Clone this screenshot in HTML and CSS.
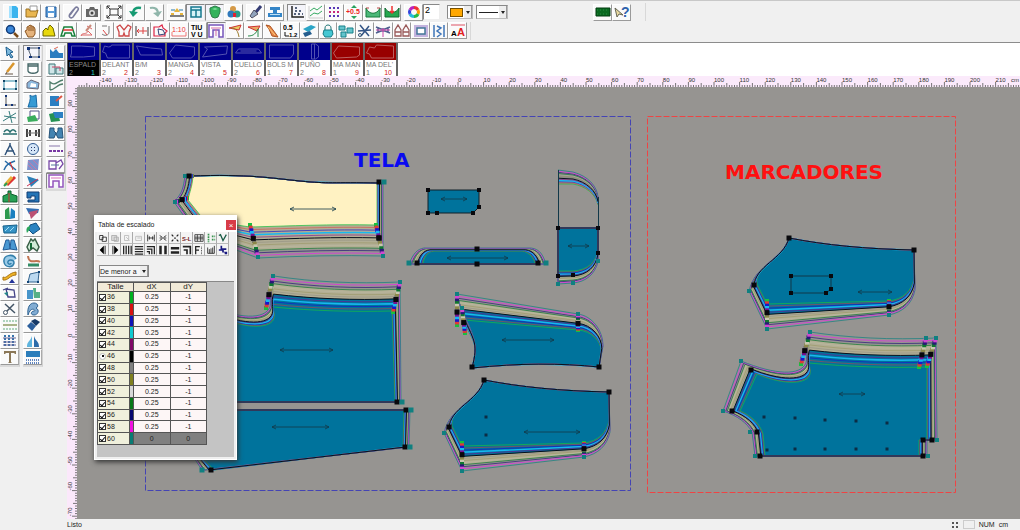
FILE: index.html
```html
<!DOCTYPE html>
<html lang="es">
<head>
<meta charset="utf-8">
<title>Patronaje</title>
<link rel="stylesheet" href="styles.css">
</head>
<body>
<header class="bars">
  <div class="bar bar-main">
    <div class="group">
      <button aria-label="Nuevo"><svg viewBox="0 0 16 14"><path fill="#3cb4ee" d="M4 1h7l2 2v10H4z"/><path fill="#a5e2ff" d="M4 1h3v12H4z"/></svg></button>
      <button aria-label="Abrir"><svg viewBox="0 0 16 14"><path fill="#fff" stroke="#999" d="M6 1h7v6H6z"/><path fill="#e9b650" stroke="#9b7020" d="M2 4h3l1 2h6l2-1-2 7H2z"/></svg></button>
      <button aria-label="Guardar"><svg viewBox="0 0 16 14"><path fill="#5a9bd8" stroke="#245c9c" d="M3 2h10v10H3z"/><path fill="#fff" d="M5 2h6v4H5zM5 8h6v4H5z"/></svg></button>
    </div>
    <div class="group">
      <button aria-label="Adjuntar"><svg viewBox="0 0 16 14"><path fill="none" stroke="#7a7c9c" stroke-width="1.6" d="M5 10l5-7c2-2 4 0 3 2l-5 7c-2 2-5 0-3-3l4-5"/></svg></button>
      <button aria-label="Capturar"><svg viewBox="0 0 16 14"><path fill="#666" d="M2 4h3l1-2h4l1 2h3v8H2z"/><circle cx="8" cy="8" r="3" fill="#ddd"/><circle cx="8" cy="8" r="1.5" fill="#444"/></svg></button>
    </div>
    <div class="group">
      <button aria-label="Ver todo"><svg viewBox="0 0 16 14"><path fill="none" stroke="#333" d="M4 4h8v6H4zM1 1l3 3M15 1l-3 3M1 13l3-3M15 13l-3-3M1 4V1h3M12 1h3v3M1 10v3h3M12 13h3v-3"/></svg></button>
    </div>
    <div class="group">
      <button aria-label="Deshacer"><svg viewBox="0 0 16 14"><path fill="none" stroke="#159a72" stroke-width="2.4" d="M13 3C8 2 5 4 5 9"/><path fill="#159a72" d="M1 6l4 6 5-5z"/></svg></button>
      <button aria-label="Rehacer"><svg viewBox="0 0 16 14"><path fill="none" stroke="#8fb5aa" stroke-width="2.2" d="M3 3c5-1 8 1 8 6"/><path fill="#8fb5aa" d="M6 8l5 4 4-6z"/></svg></button>
    </div>
    <div class="group">
      <button aria-label="Medir"><svg viewBox="0 0 16 14"><path fill="#e6b43c" d="M2 8h3v2H2zM11 8h3v2h-3zM8 3l3 4H5z"/><path stroke="#555" stroke-width="1.500" d="M1 11h14"/><path stroke="#2478a8" d="M2 5h4M10 5h4"/></svg></button>
      <button class="on" aria-label="Cuadrícula"><svg viewBox="0 0 16 14"><path fill="#d6f2f8" stroke="#16788e" stroke-width="1.500" d="M3 2h10v10H3zM3 5h10M8 5v7"/></svg></button>
      <button class="on" aria-label="Relleno"><svg viewBox="0 0 16 14"><path fill="#32b25c" stroke="#2d7c48" d="M3 3l5-2 5 2v4l-2 5-3 1-3-1-2-5z"/><path fill="#7fdd98" d="M5 4l3-1 3 1-3 1z"/></svg></button>
      <button aria-label="Colores"><svg viewBox="0 0 16 14"><circle cx="7" cy="4" r="3" fill="#d59a48"/><circle cx="5" cy="9" r="3.500" fill="#2f78bc"/><circle cx="11" cy="9" r="3.500" fill="#2a9c8a"/><path fill="#d23" d="M7 8h3v4H7z"/></svg></button>
    </div>
    <div class="group">
      <button aria-label="Pincel"><svg viewBox="0 0 16 14"><path stroke="#353c74" stroke-width="3" d="M13 1L8 7"/><path fill="#91a4bd" stroke="#556" d="M6 5l4 4-6 4-2-2z"/></svg></button>
      <button aria-label="Trazar"><svg viewBox="0 0 16 14"><path fill="#3485c7" d="M3 2h10v3H3zM6 5h4v3h5v4H1V8h5z"/><path fill="#bce0f5" d="M3 9h10v1H3z"/></svg></button>
    </div>
    <div class="group">
      <button class="on" aria-label="Ejes"><svg viewBox="0 0 16 14"><path fill="none" stroke="#222" stroke-width="1.500" d="M3 1v11h12"/><path stroke="#235" stroke-width="1.500" stroke-dasharray="2 2" d="M5 9h9M6 6h7M6 3h3"/></svg></button>
      <button aria-label="Curvas"><svg viewBox="0 0 16 14"><path fill="none" stroke="#35aa62" d="M2 6l4-3 3 2 5-4M2 11l4-3 4 1 4-3"/><path stroke="#ccc" fill="none" d="M1 1v12h14"/></svg></button>
      <button aria-label="Puntos"><svg viewBox="0 0 16 14"><path stroke="#5937b5" stroke-width="2" stroke-dasharray="2 2" d="M2 3h12M2 11h12"/><path stroke="#c7277c" stroke-width="2" stroke-dasharray="2 2" d="M2 7h12"/></svg></button>
      <button aria-label="Paso 0,5"><svg viewBox="0 0 16 14"><text x="0" y="9" font-size="7" font-weight="bold" fill="#e22">+0.5</text><path fill="#29a25d" d="M8 0l3 3H5zM8 14l3-3H5z"/></svg></button>
      <button aria-label="Curva abierta"><svg viewBox="0 0 16 14"><path fill="#4bb878" stroke="#167c3c" d="M1 3c3 7 11 7 14 0v9H1z"/><path stroke="#b44" d="M1 3h3M12 3h3"/></svg></button>
      <button aria-label="Curva cerrada"><svg viewBox="0 0 16 14"><path fill="#25a74e" stroke="#106c30" d="M1 3c3 6 11 6 14 0v9H1z"/><path stroke="#e33" stroke-width="1.500" fill="none" d="M8 1v7M6 6l2 2 2-2"/></svg></button>
    </div>
    <div class="group">
      <button aria-label="Color"><svg viewBox="0 0 16 14"><g fill="none" stroke-width="3"><path stroke="#e33" d="M8 2.500A4.500 4.500 0 0 1 12 5"/><path stroke="#f90" d="M12 5a4.500 4.500 0 0 1 0 4"/><path stroke="#2b4" d="M12 9a4.500 4.500 0 0 1-4 2.500"/><path stroke="#2bd" d="M8 11.500A4.500 4.500 0 0 1 4 9"/><path stroke="#34d" d="M4 9a4.500 4.500 0 0 1 0-4"/><path stroke="#b2b" d="M4 5a4.500 4.500 0 0 1 4-2.500"/></g></svg></button>
      <input class="weight" aria-label="Grosor" value="2">
    </div>
    <div class="group combos">
      <button class="combo" aria-label="Color de relleno"><i class="swatch"></i><b class="drop"></b></button>
      <button class="combo combo-line" aria-label="Tipo de línea"><i class="stroke"></i><b class="drop"></b></button>
    </div>
    <div class="group help">
      <button aria-label="Monitor"><svg viewBox="0 0 16 14"><path fill="#0a6a20" stroke="#033c10" d="M1 3h14v8H1z"/><path stroke="#2a8a42" stroke-dasharray="1 2" d="M2 5h12M2 9h12"/></svg></button>
      <button aria-label="Ayuda"><svg viewBox="0 0 16 14"><path fill="#e8d9a0" stroke="#665" d="M1 3l2 9 2-3 4 1z"/><text x="7" y="12" font-size="14" font-weight="bold" fill="#2f62ac">?</text></svg></button>
    </div>
  </div>
  <div class="bar bar-tools">
    <button aria-label="Zoom"><svg viewBox="0 0 16 14"><path stroke="#7a4a18" stroke-width="2.500" d="M10 9l4 4"/><circle cx="6.500" cy="5.500" r="4" fill="#3a86d8" stroke="#123c78" stroke-width="1.500"/></svg></button>
    <button aria-label="Mover"><svg viewBox="0 0 16 14"><path fill="#e5b37c" stroke="#8a5420" d="M5 13L2 7l2-1V3l2-1 1-1 2 1 2 1 1 2v5l-2 3z"/><path stroke="#8a5420" d="M6 3v4M8 2v5M10 3v4"/></svg></button>
    <button aria-label="Patrón"><svg viewBox="0 0 16 14"><path fill="#e8d80c" stroke="#6d6600" d="M2 12V7l3-3 2 2V4l2-3 3 3 2 8z"/></svg></button>
    <button aria-label="Falda"><svg viewBox="0 0 16 14"><path fill="none" stroke="#17803a" stroke-width="1.500" d="M4 3h8l3 9h-3l-1-3H5l-1 3H1z"/><path stroke="#d33" stroke-width="1.500" d="M3 6h10"/></svg></button>
    <button aria-label="Editar"><svg viewBox="0 0 16 14"><path fill="none" stroke="#d66" d="M2 12c1-4 6-1 7-5l4 4H2M8 2l5 3"/><path stroke="#c98a7a" stroke-width="2" d="M12 1L7 7"/></svg></button>
    <button aria-label="Margen"><svg viewBox="0 0 16 14"><path fill="none" stroke="#777" d="M5 2h5M12 2v6c0 4-5 4-7 2"/><path stroke="#d44" d="M6 6l4 5"/></svg></button>
    <button aria-label="Copiar espejo"><svg viewBox="0 0 16 14"><path fill="none" stroke="#cc4747" stroke-width="1.300" d="M3 12V8L1 3l3-2 4 5 4-5 3 2-2 5v4H9l-1-3-1 3z"/></svg></button>
    <button aria-label="Distancia H"><svg viewBox="0 0 16 14"><path fill="none" stroke="#777" stroke-width="1.500" d="M2 2v10M14 3v9"/><path stroke="#d44" fill="none" d="M3 7h10M5 5L3 7l2 2M9 3v7"/></svg></button>
    <button aria-label="Rotar pieza"><svg viewBox="0 0 16 14"><path fill="none" stroke="#d24" stroke-width="1.200" d="M1 12V3h5l3-2 1 3 4 3-2 2v3z"/><path fill="none" stroke="#347" d="M5 5l5 1 2 4-6 1z"/></svg></button>
    <button aria-label="Escala 1:10"><svg viewBox="0 0 16 14"><text x="1" y="8" font-size="7" fill="#e33">1:10</text><path fill="none" stroke="#e77" d="M1 8v4h14V8"/></svg></button>
    <button aria-label="Texto vertical"><svg viewBox="0 0 16 14"><text x="1" y="6" font-size="7" font-weight="bold">TIU</text><text x="1" y="13" font-size="7" font-weight="bold">V U</text></svg></button>
    <button class="on" aria-label="Máquina"><svg viewBox="0 0 16 14"><path fill="#fff" stroke="#7556ba" stroke-width="1.500" d="M1 1h14v12h-4V6H5v7H1z"/><path stroke="#d36fa5" d="M3 4h10M8 5v7"/></svg></button>
    <button aria-label="Ángulo"><svg viewBox="0 0 16 14"><path fill="#e9ca64" stroke="#c33" d="M2 4l12-3-2 5z"/><path fill="none" stroke="#997a2a" d="M4 4c5 0 7 3 8 9"/></svg></button>
    <button aria-label="Ángulo recto"><svg viewBox="0 0 16 14"><path fill="#e9a864" stroke="#c33" d="M2 3l12-1-3 5z"/><path fill="none" stroke="#2a8a4a" d="M2 12c6 0 8-3 10-7v8"/></svg></button>
    <button aria-label="Pinza"><svg viewBox="0 0 16 14"><path fill="#e8884c" stroke="#ad5420" d="M2 1l4 1 6 8 2 3-6-1-3-7z"/><path stroke="#fc7" d="M4 3l7 8"/></svg></button>
    <button aria-label="Rango"><svg viewBox="0 0 16 14"><text x="0" y="6" font-size="7" font-weight="bold">0.5</text><text x="6" y="13" font-size="6" font-weight="bold">1.2</text><path fill="none" stroke="#111" d="M2 8v4h4"/></svg></button>
    <button aria-label="Goma"><svg viewBox="0 0 16 14"><path fill="#2ba5c6" d="M2 5l8-4 5 2-8 5z"/><path fill="#245d8e" d="M2 9l7-2 2 3-7 3z"/></svg></button>
    <button aria-label="Bloquear"><svg viewBox="0 0 16 14"><path fill="none" stroke="#277" d="M5 7V4c0-4 6-4 6 0v3"/><path fill="#45c7d3" stroke="#177b85" d="M4 6h8l1 4-2 3H5l-2-3z"/></svg></button>
    <button aria-label="Piezas"><svg viewBox="0 0 16 14"><path fill="#64c4cc" stroke="#178089" d="M1 2h6v4H1zM9 4h6v5H9zM3 8h5v5H3z"/></svg></button>
    <button aria-label="Cortar"><svg viewBox="0 0 16 14"><path stroke="#345585" stroke-width="1.500" d="M3 1l9 11M1 7l13-1M12 2L4 12"/><circle cx="3" cy="11" r="1.500" fill="none" stroke="#357"/></svg></button>
    <button aria-label="Unir"><svg viewBox="0 0 16 14"><path fill="none" stroke="#506090" stroke-width="1.500" d="M1 3l5 2h4l5-2M1 9l5-2h4l5 2M3 3v6M13 3v6"/><path stroke="#c4a" d="M1 6h14M8 4v9"/></svg></button>
    <button aria-label="Simetría"><svg viewBox="0 0 16 14"><path fill="none" stroke="#9a5a5a" stroke-width="1.300" d="M1 12V6l3-5 3 5v6zM9 12V6l3-5 3 5v6zM1 8h6M9 8h6"/></svg></button>
    <button aria-label="Marco"><svg viewBox="0 0 16 14"><path fill="#c4b3de" d="M1 1h14v12H1z"/><path fill="#fff" stroke="#479" stroke-width="1.500" d="M4 4h8v6H4z"/></svg></button>
    <button aria-label="Alinear"><svg viewBox="0 0 16 14"><path fill="none" stroke="#3f75b8" stroke-width="1.500" d="M3 1v12M13 1v12M6 2l4 2-4 3 4 3-4 3"/></svg></button>
    <button aria-label="Tamaño de texto"><svg viewBox="0 0 16 14"><path stroke="#d56" d="M1 1h14"/><text x="1" y="12" font-size="8" font-weight="bold">A</text><text x="7" y="12" font-size="11" font-weight="bold" fill="#e02020">A</text></svg></button>
  </div>
</header>

<main class="work">
  <aside class="palettes">
    <div class="palette">
      <button aria-label="Seleccionar"><svg viewBox="0 0 16 14"><path fill="#7db9dd" stroke="#1c5e8e" d="M4 1l7 5-3 1 3 4-2 1-2-4-2 2z"/></svg></button>
      <button aria-label="Lápiz"><svg viewBox="0 0 16 14"><path stroke="#d9962d" stroke-width="2.500" d="M12 1L5 10"/><path fill="none" stroke="#654" d="M3 12h8M5 10l-1 2"/></svg></button>
      <button aria-label="Rectángulo"><svg viewBox="0 0 16 14"><path fill="#fff" stroke="#2a8aa8" d="M2 3h12v8H2z"/><path stroke="#146" stroke-width="2" stroke-dasharray="2 10" d="M1 3h15M1 11h15"/></svg></button>
      <button aria-label="Polilínea"><svg viewBox="0 0 16 14"><path fill="none" stroke="#555" d="M4 1v10h10"/><path fill="#137" d="M3 10h2v2H3zM9 10h2v2H9zM3 1h2v2H3z"/></svg></button>
      <button aria-label="Punto"><svg viewBox="0 0 16 14"><path stroke="#347c7c" fill="none" d="M1 11L14 3M7 1l3 12M2 6l12 2"/></svg></button>
      <button aria-label="Paralela"><svg viewBox="0 0 16 14"><path fill="none" stroke="#256c6c" stroke-width="1.500" d="M1 8h14M2 6c2-3 4-3 6 0 2-3 4-3 6 0"/></svg></button>
      <button aria-label="Compás"><svg viewBox="0 0 16 14"><path fill="none" stroke="#31547b" stroke-width="1.500" d="M8 1v2L3 13M8 3l5 10M4 9h8"/></svg></button>
      <button aria-label="Dividir"><svg viewBox="0 0 16 14"><path fill="none" stroke="#296ca8" stroke-width="1.500" d="M3 3l11 9M2 12c2-6 6-7 11-9"/><path stroke="#d22" d="M8 4l3 8"/></svg></button>
      <button aria-label="Marcador"><svg viewBox="0 0 16 14"><path stroke="#d33" stroke-width="3" d="M5 11l8-8"/><path stroke="#e8b23a" stroke-width="3" d="M3 11l7-8"/><path stroke="#2a9b55" stroke-width="2" d="M2 12l3-3"/></svg></button>
      <button aria-label="Bolso"><svg viewBox="0 0 16 14"><path fill="#27a055" stroke="#0b602c" d="M1 6l5-2V1h3v3l6 2v6H1z"/><path stroke="#c33" d="M7 3v9"/></svg></button>
      <button aria-label="Tijeras"><svg viewBox="0 0 16 14"><path fill="#2e9a4f" d="M3 4l4-3 1 12H3z"/><path fill="#1b80c0" d="M9 2l4 3v7l-5 1z"/></svg></button>
      <button aria-label="Banda"><svg viewBox="0 0 16 14"><path fill="#3793c5" stroke="#17628c" d="M1 4l14-1-1 8H2z"/><path stroke="#a5e2f7" d="M3 9l4-4M8 9l4-4"/></svg></button>
      <button aria-label="Falda volante"><svg viewBox="0 0 16 14"><path fill="#4a98d2" stroke="#205c98" d="M4 2h3l1 9-7 1zM9 2h3l3 10-7-1z"/></svg></button>
      <button aria-label="Espiral"><svg viewBox="0 0 16 14"><path fill="#9acbe8" stroke="#3380ac" stroke-width="1.500" d="M14 5c-3-6-13-4-12 3 1 6 9 6 10 1 0-4-7-4-6 0 1 2 3 1 3 0"/></svg></button>
      <button aria-label="Onda"><svg viewBox="0 0 16 14"><path fill="#efb324" stroke="#a87313" d="M1 7c4 2 5-4 13-5v3c-6 0-8 6-13 5z"/><path fill="#239" d="M10 9l3 4H7z"/></svg></button>
      <button aria-label="Girar"><svg viewBox="0 0 16 14"><path fill="none" stroke="#448" stroke-width="1.300" d="M4 3l8 1 1 7H6zM1 4l5-2"/><path fill="#288" d="M2 7l3 3 1-4z"/></svg></button>
      <button aria-label="Cortar línea"><svg viewBox="0 0 16 14"><path fill="none" stroke="#456" stroke-width="1.500" d="M3 2l10 9M12 2L5 9"/><circle cx="3.500" cy="10.500" r="2" fill="none" stroke="#456"/></svg></button>
      <button aria-label="Costuras"><svg viewBox="0 0 16 14"><path stroke="#63ad83" stroke-dasharray="2 1" d="M1 3h14M1 11h14"/><path stroke="#a9b48a" stroke-width="2" d="M1 7h14"/></svg></button>
      <button aria-label="Tejido"><svg viewBox="0 0 16 14"><path stroke="#3674ad" stroke-width="2" stroke-dasharray="2 1" d="M3 1v12M7 1v12M11 1v12"/><path stroke="#669" d="M1 4h13M1 8h13M1 11h13"/></svg></button>
      <button aria-label="Texto"><svg viewBox="0 0 16 14"><path fill="#8b7858" d="M2 1h12v3h-1L12 3H9v9l1 1H6l1-1V3H4L3 4H2z"/></svg></button>
    </div>
    <div class="palette">
      <button class="on" aria-label="Puntos de control"><svg viewBox="0 0 16 14"><path fill="none" stroke="#456" d="M4 2h10v9H5c2-3-2-4-1-9z"/><path fill="#137" d="M2 1h3v3H2zM13 1h2v2h-2zM13 10h2v2h-2zM4 10h3v2H4z"/></svg></button>
      <button aria-label="Bolsillo"><svg viewBox="0 0 16 14"><path fill="#fff" stroke="#466" stroke-width="1.300" d="M3 2h10v7c-1 3-9 3-10 0zM3 4h10"/></svg></button>
      <button aria-label="Manga"><svg viewBox="0 0 16 14"><path fill="#8db9de" stroke="#667" d="M2 10V5l4-3 8 3-1 6z"/><path fill="#fff" d="M6 5l5 1v3H5z"/></svg></button>
      <button aria-label="Frente"><svg viewBox="0 0 16 14"><path fill="#369bd4" stroke="#1769a4" d="M5 1c2 2 4 1 6 0l1 12H3c1-4 3-7 2-12z"/></svg></button>
      <button aria-label="Copiar"><svg viewBox="0 0 16 14"><path fill="#fff" stroke="#558" d="M5 1h9v8H5z"/><path fill="#3aad5d" d="M2 7l8-2 3 6-10 1z"/></svg></button>
      <button aria-label="Distancia"><svg viewBox="0 0 16 14"><path stroke="#444" stroke-width="2" d="M2 3v8M14 3v8M5 4v6M11 4v6"/><path stroke="#777" d="M2 7h12"/></svg></button>
      <button aria-label="Botón"><svg viewBox="0 0 16 14"><circle cx="8" cy="7" r="5.500" fill="#d5e6f7" stroke="#305c94"/><path fill="#236" d="M6 5h1v1H6zM9 5h1v1H9zM6 8h1v1H6zM9 8h1v1H9z"/></svg></button>
      <button aria-label="Trama"><svg viewBox="0 0 16 14"><path fill="#7c91cc" d="M3 2l11-1-1 11H2z"/><path stroke="#c47ba9" d="M3 3l9 9M3 7l5 5M8 2l5 5"/></svg></button>
      <button aria-label="Plisado"><svg viewBox="0 0 16 14"><path fill="#2e80b7" d="M2 2l12 4-8 7z"/><path stroke="#c35" d="M2 12l11-7"/></svg></button>
      <button aria-label="Coser"><svg viewBox="0 0 16 14"><path fill="#2474b6" stroke="#123f75" d="M2 2h12v10H3v-2h7V6H6v2H2z"/></svg></button>
      <button aria-label="Cinta"><svg viewBox="0 0 16 14"><path fill="#346eb2" d="M1 2l13 1-1 4-9 1z"/><path fill="#bb5174" d="M4 6l9-2-1 3-6 6z"/></svg></button>
      <button aria-label="Rellenar"><svg viewBox="0 0 16 14"><path fill="#2b83c1" stroke="#114f80" d="M5 3l6-2 4 6-7 5-4-4z"/><path fill="#2ba65b" d="M5 4c-4 1-4 4-3 7l3-4z"/></svg></button>
      <button aria-label="Pinzas"><svg viewBox="0 0 16 14"><path fill="#d1ecd8" stroke="#385f46" stroke-width="1.500" d="M6 1l2 2 2-2 4 8-2 4-4-3-4 3-2-4z"/><path fill="#146b36" d="M5 5h2v6H5z"/></svg></button>
      <button aria-label="Medida de curva"><svg viewBox="0 0 16 14"><path fill="none" stroke="#c07452" stroke-width="2" d="M3 2c1 9 8 3 12 6"/><path stroke="#338d66" stroke-width="3" d="M3 11h11"/></svg></button>
      <button aria-label="Transformar"><svg viewBox="0 0 16 14"><path fill="#bbd9f1" stroke="#35658f" d="M3 12L5 4l9-2-1 10z"/><path fill="#147" d="M2 11h2v2H2zM13 1h2v2h-2zM12 11h2v2h-2z"/></svg></button>
      <button aria-label="Pulverizar"><svg viewBox="0 0 16 14"><path fill="#4795ca" d="M2 4h6v9H2z"/><path fill="#56b087" d="M8 2h3v4h4v6H9z"/></svg></button>
      <button aria-label="Sisa"><svg viewBox="0 0 16 14"><path fill="#81acd3" stroke="#306493" d="M3 13C2 5 5 1 9 1s5 4 2 5c4 2 2 7-2 7s-3-4 0-4-3-6-6 4z"/></svg></button>
      <button aria-label="Borrar"><svg viewBox="0 0 16 14"><path fill="#2b5e9c" d="M2 8l4-4 5 4-4 5z"/><path fill="#173a68" d="M6 3l4-2 5 3-4 4z"/></svg></button>
      <button aria-label="Espejo"><svg viewBox="0 0 16 14"><path fill="#5eb4de" d="M7 2v11H2c0-6 3-5 5-11z"/><path fill="#2c6ba9" d="M9 2v11h5c0-6-3-5-5-11z"/></svg></button>
      <button aria-label="Flecos"><svg viewBox="0 0 16 14"><path fill="#2b7dbb" d="M1 1h14v6H1z"/><path stroke="#2b5eac" stroke-width="1.500" stroke-dasharray="1 1" d="M1 10h14M1 13h14"/></svg></button>
    </div>
    <div class="palette">
      <button aria-label="Gráfico"><svg viewBox="0 0 16 14"><path fill="#2b7dc0" d="M2 12V3l3 3 3-3 3 4h4v5z"/><path stroke="#d65" d="M6 3l4-2"/></svg></button>
      <button aria-label="Comparar"><svg viewBox="0 0 16 14"><path fill="#cfe5e7" stroke="#3c7678" d="M1 2h6v10H1zM8 6h7v6H8z"/><path stroke="#c46" fill="none" d="M4 5h8v4"/></svg></button>
      <button aria-label="Curva"><svg viewBox="0 0 16 14"><path fill="none" stroke="#4f7d6a" stroke-width="1.300" d="M2 12V4c5 5 7-1 13-2M2 12c5 0 7-6 13-6"/></svg></button>
      <button aria-label="Extraer"><svg viewBox="0 0 16 14"><path fill="#2b7fc2" d="M2 2h9v10H2z"/><path stroke="#d54" stroke-width="2" d="M8 7l6-5"/></svg></button>
      <button aria-label="Superponer"><svg viewBox="0 0 16 14"><path fill="#259253" d="M1 4l9-2 2 9-9 1z"/><path fill="#2b7fc2" d="M5 2h10v6H7z"/></svg></button>
      <button aria-label="Casar"><svg viewBox="0 0 16 14"><path fill="#4383b1" stroke="#27547a" d="M2 2h4v3l2 2-2 5H1zM10 2h4l1 10h-5L8 8l2-3z"/></svg></button>
      <button aria-label="Línea de puntos"><svg viewBox="0 0 16 14"><path stroke="#87a" d="M1 4h11"/><path stroke="#7838a3" stroke-width="2" stroke-dasharray="3 1" d="M1 9h14"/></svg></button>
      <button aria-label="Girar pieza"><svg viewBox="0 0 16 14"><path fill="#fff" stroke="#7949a8" stroke-width="1.300" d="M1 3h7v8H1zM8 5l5-3 2 4-4 5"/><path stroke="#579" d="M3 7h8"/></svg></button>
      <button class="on" aria-label="Máquina de coser"><svg viewBox="0 0 16 14"><path fill="#fff" stroke="#9354bd" stroke-width="1.500" d="M1 1h14v12h-4V7H5v6H1z"/><path stroke="#dc72b8" d="M3 4h10"/></svg></button>
    </div>
  </aside>

  <section class="sheet">
    <nav class="pieces" aria-label="Piezas">
      <button class="piece current"><svg viewBox="0 0 30 17"><path d="M3 3h10l13 1v9l-11 1H2l1-4z"/></svg><span class="name">ESPALD</span><span class="count">2</span><span class="index">1</span></button>
      <button class="piece"><svg viewBox="0 0 30 17"><path d="M3 3l4 1q3 0 3-2h18v13H6l-2-5-3-1z"/></svg><span class="name">DELANT</span><span class="count">2</span><span class="index">2</span></button>
      <button class="piece"><svg viewBox="0 0 30 17"><path d="M2 3l14 2 11 1 1 6H6z"/></svg><span class="name">B/M</span><span class="count">2</span><span class="index">3</span></button>
      <button class="piece"><svg viewBox="0 0 30 17"><path d="M8 2l19 2v8l-3 3H5l-3-5z"/></svg><span class="name">MANGA</span><span class="count">2</span><span class="index">4</span></button>
      <button class="piece"><svg viewBox="0 0 30 17"><path d="M4 4l23-1-1 8-24 3 5-8z"/></svg><span class="name">VISTA</span><span class="count">2</span><span class="index">5</span></button>
      <button class="piece"><svg viewBox="0 0 30 17"><path d="M2 10l3-4h20l3 4zM7 8h16"/></svg><span class="name">CUELLO</span><span class="count">2</span><span class="index">6</span></button>
      <button class="piece"><svg viewBox="0 0 30 17"><path d="M3 2h24v9l-3 4H3z"/></svg><span class="name">BOLS M</span><span class="count">1</span><span class="index">7</span></button>
      <button class="piece"><svg viewBox="0 0 30 17"><path d="M12 1h4l3 2v11l-3 2h-4zM15 1v15"/></svg><span class="name">PUÑO</span><span class="count">2</span><span class="index">8</span></button>
      <button class="piece marker"><svg viewBox="0 0 30 17"><path d="M6 3l21 1v8l-3 2-20 1-3-5z"/></svg><span class="name">MA MAN</span><span class="count">1</span><span class="index">9</span></button>
      <button class="piece marker"><svg viewBox="0 0 30 17"><path d="M4 4l5 1 2-3 17 1v12H6l-2-4-3-1z"/></svg><span class="name">MA DEL'</span><span class="count">1</span><span class="index">10</span></button>
    </nav>
    <svg class="ruler-top" id="rulerTop"></svg>
    <div class="plane">
      <svg class="ruler-side" id="rulerSide"></svg>
      <div class="canvas">
        <svg class="drawing"><g transform="translate(-77 -87)">
          <path class="zone zone-blue" d="M145.500 116.500H630.500V490.500H145.500Z"/>
          <path class="zone zone-red" d="M647.500 116.500H955.500V492.500H647.500Z"/>
          <text class="zone-title blue" x="354" y="167">TELA</text>
          <text class="zone-title red" x="725" y="179">MARCADORES</text>
          <g id="nests"></g>
          <g id="marks"></g>
        </g></svg>

        <section class="dialog" aria-label="Tabla de escalado">
          <header class="dialog-head"><h2>Tabla de escalado</h2><button class="close" aria-label="Cerrar">×</button></header>
          <div class="dialog-tools">
            <button aria-label="Copiar"><svg viewBox="0 0 12 12"><path fill="#fff" stroke="#222" d="M2 3h4v5H2zM5 5h5v5H5z"/></svg></button>
            <button aria-label="Pegar"><svg viewBox="0 0 12 12"><path fill="#ddd" stroke="#aaa" d="M2 3h6v6H2zM5 5h5v5H5z"/></svg></button>
            <button aria-label="Pegar X"><svg viewBox="0 0 12 12"><path fill="none" stroke="#bbb" d="M3 3h5v6H3zM5 5l4 4"/></svg></button>
            <button aria-label="Pegar Y"><svg viewBox="0 0 12 12"><path fill="none" stroke="#bbb" d="M2 4h7v5H2zM4 6h4"/></svg></button>
            <button aria-label="Invertir X"><svg viewBox="0 0 12 12"><path stroke="#222" d="M2 2v8M10 2v8M3 6h6M4 4v4M8 4v4"/></svg></button>
            <button aria-label="Invertir Y"><svg viewBox="0 0 12 12"><path stroke="#222" d="M2 3l3 2M10 3L7 5M2 9l3-2M10 9L7 7M2 6h8"/></svg></button>
            <button aria-label="Invertir XY"><svg viewBox="0 0 12 12"><path stroke="#222" stroke-width="1.500" d="M2 2l2 2M10 2L8 4M2 10l2-2M10 10L8 8M5 6h2"/></svg></button>
            <button aria-label="S-L"><svg viewBox="0 0 12 12"><text x="0" y="9" font-size="7" font-weight="bold" fill="#722">S-L</text></svg></button>
            <button aria-label="Tabla"><svg viewBox="0 0 12 12"><path fill="none" stroke="#333" d="M1 2h10v8H1zM1 5h10M1 7h10M4 2v8M8 2v8"/></svg></button>
            <button aria-label="Lista"><svg viewBox="0 0 12 12"><path stroke="#3a9450" stroke-width="2" stroke-dasharray="2 1" d="M3 1v10M7 4h4M7 8h4"/></svg></button>
            <button aria-label="Aplicar"><svg viewBox="0 0 12 12"><path fill="none" stroke="#185b45" stroke-width="1.500" d="M1 3l2-1 3 7 4-7"/></svg></button>
            <button aria-label="Anterior"><svg viewBox="0 0 12 12"><path d="M7 1v10L2 6zM8 1h1v10H8z"/></svg></button>
            <button aria-label="Siguiente"><svg viewBox="0 0 12 12"><path d="M5 1v10l5-5zM3 1h1v10H3z"/></svg></button>
            <button aria-label="Columnas"><svg viewBox="0 0 12 12"><path stroke="#222" stroke-width="1.500" d="M2 1v10M5 1v10M8 1v10M11 1v10"/></svg></button>
            <button aria-label="Filas"><svg viewBox="0 0 12 12"><path stroke="#222" stroke-width="1.500" d="M1 2h10M1 5h10M1 8h10M1 11h10"/></svg></button>
            <button aria-label="Esquina"><svg viewBox="0 0 12 12"><path fill="none" stroke="#222" stroke-width="1.500" d="M1 2h9v9M1 5h6v6M1 8h3v3"/></svg></button>
            <button aria-label="Vertical"><svg viewBox="0 0 12 12"><path stroke="#222" stroke-width="3" d="M3 1v10M9 1v10"/></svg></button>
            <button aria-label="Horizontal"><svg viewBox="0 0 12 12"><path stroke="#222" stroke-width="3" d="M1 4h10M1 9h10"/></svg></button>
            <button aria-label="Ángulo"><svg viewBox="0 0 12 12"><path fill="none" stroke="#222" stroke-width="2" d="M1 2h9v9M2 6h4v5"/></svg></button>
            <button aria-label="Fórmula"><svg viewBox="0 0 12 12"><path fill="none" stroke="#222" stroke-width="1.500" d="M2 11V2h5M2 6h4"/><path stroke="#222" stroke-dasharray="1 1" d="M9 2v9"/></svg></button>
            <button aria-label="Escalera"><svg viewBox="0 0 12 12"><path fill="none" stroke="#222" d="M2 3v7h8V1M4 10V5M6 10V4M8 10V3"/></svg></button>
            <button aria-label="Exportar"><svg viewBox="0 0 12 12"><path fill="#1a1a80" d="M5 1v3h5v2H7v2h4v3H8V9H5V7H3l3 0H1V5h2V1z"/></svg></button>
          </div>
          <div class="order"><select aria-label="Orden"><option>De menor a</option></select><b class="drop"></b></div>
          <div class="grid-area">
            <table class="grading">
              <colgroup><col class="col-size"><col class="col-color"><col><col></colgroup>
              <thead><tr><th colspan="2">Talle</th><th>dX</th><th>dY</th></tr></thead>
              <tbody>
                <tr><td><label><input type="checkbox" checked>36</label></td><td class="c36"></td><td>0.25</td><td>-1</td></tr>
                <tr><td><label><input type="checkbox" checked>38</label></td><td class="c38"></td><td>0.25</td><td>-1</td></tr>
                <tr><td><label><input type="checkbox" checked>40</label></td><td class="c40"></td><td>0.25</td><td>-1</td></tr>
                <tr><td><label><input type="checkbox" checked>42</label></td><td class="c42"></td><td>0.25</td><td>-1</td></tr>
                <tr><td><label><input type="checkbox" checked>44</label></td><td class="c44"></td><td>0.25</td><td>-1</td></tr>
                <tr><td><label><input type="radio" checked>46</label></td><td class="c46"></td><td>0.25</td><td>-1</td></tr>
                <tr><td><label><input type="checkbox" checked>48</label></td><td class="c48"></td><td>0.25</td><td>-1</td></tr>
                <tr><td><label><input type="checkbox" checked>50</label></td><td class="c50"></td><td>0.25</td><td>-1</td></tr>
                <tr><td><label><input type="checkbox" checked>52</label></td><td class="c52"></td><td>0.25</td><td>-1</td></tr>
                <tr><td><label><input type="checkbox" checked>54</label></td><td class="c54"></td><td>0.25</td><td>-1</td></tr>
                <tr><td><label><input type="checkbox" checked>56</label></td><td class="c56"></td><td>0.25</td><td>-1</td></tr>
                <tr><td><label><input type="checkbox" checked>58</label></td><td class="c58"></td><td>0.25</td><td>-1</td></tr>
                <tr class="last"><td><label><input type="checkbox" checked>60</label></td><td class="c60"></td><td>0</td><td>0</td></tr>
              </tbody>
            </table>
          </div>
        </section>
      </div>
    </div>
  </section>
</main>
<footer class="status"><span>Listo</span><span class="cells"><svg viewBox="0 0 8 8"><path stroke="#555" stroke-width="2" d="M1 2h2M5 2h2M1 6h2M5 6h2"/></svg><i></i><b>NUM</b><b>cm</b></span></footer>
<script src="app.js"></script>
</body>
</html>
```

FILE: styles.css
```css
* { box-sizing: border-box; }
body {
  margin: 0;
  min-height: 100vh;
  display: flex;
  flex-direction: column;
  background: #f0f0f0;
  color: #222;
  font-family: "Liberation Sans", Arial, sans-serif;
  font-size: 7px;
}
button { font: inherit; color: inherit; margin: 0; padding: 0; }
svg { display: block; }

/* toolbars */
.bars {
  display: flex;
  flex-direction: column;
  gap: 1px;
  padding: 2px 0;
  border-top: 1px solid #c8c8c8;
  border-bottom: 1px solid #8c8c8c;
}
.bar { display: flex; height: 18px; align-self: flex-start; border-right: 1px solid #d8d8d8; }
.bar-main { gap: 3px; padding: 0 14px 0 3px; }
.bar-tools { display: grid; grid-template-columns: repeat(25, 1fr); width: 471px; padding: 0 3px; }
.group { display: flex; align-items: center; }
.bar button, .palette button {
  display: flex;
  align-items: center;
  justify-content: center;
  width: 19px;
  height: 17px;
  background: #fafafa;
  border: 1px solid;
  border-color: #fff #9a9a9a #9a9a9a #fff;
}
.bar-tools button { width: auto; }
.bar button.on, .palette button.on { border-color: #888 #e8e8e8 #e8e8e8 #888; background: #f4f4fa; }
.bar svg, .palette svg { width: 16px; height: 14px; }
.weight {
  width: 17px;
  height: 16px;
  padding: 0 0 4px 1px;
  border: 1px solid;
  border-color: #888 #eee #eee #888;
  background: #fff;
  font: 9px "Liberation Sans", Arial, sans-serif;
}
.combos { gap: 3px; margin-left: 4px; }
.bar .combo { width: 26px; height: 14px; justify-content: space-between; padding-left: 2px; border-color: #888 #bbb #bbb #888; background: #fff; }
.bar .combo-line { width: 32px; }
.swatch { width: 13px; height: 9px; background: #ffa800; border: 1px solid #775000; }
.stroke { width: 19px; border-top: 1px solid #222; }
.drop { display: flex; align-items: center; justify-content: center; width: 8px; height: 12px; background: #eee; border-right: 1px solid #999; }
.drop::after { content: ""; border: 2px solid transparent; border-top: 3px solid #222; border-bottom: 0; }
.help { margin-left: 82px; }

/* work area */
.work { flex: 1; display: flex; min-height: 0; }
.palettes { display: flex; align-items: flex-start; gap: 3px; width: 67px; padding-top: 2px; }
.palette { display: flex; flex-direction: column; width: 20px; border-right: 1px solid #d0d0d0; border-bottom: 2px solid #dadada; }
.palette button { height: 16px; border-color: #fff #aaa #999 #fff; }
.sheet { flex: 1; display: flex; flex-direction: column; min-width: 0; }
.pieces { display: flex; height: 33px; background: #fff; border-left: 1px solid #555; }
.piece {
  display: grid;
  grid-template: 17px 9px 7px / 1fr 1fr;
  width: 33px;
  border: 0;
  border-right: 2px solid #666;
  background: #fff;
  color: #777;
  overflow: hidden;
  font-size: 7px;
  line-height: 8px;
  text-align: left;
}
.piece svg { grid-column: 1 / 3; width: 31px; height: 17px; background: #00008c; }
.piece path { fill: none; stroke: #5252b0; }
.piece.marker svg { background: #980000; }
.piece.marker path { stroke: #bc6060; }
.name { grid-column: 1 / 3; padding: 1px 0 0 1px; white-space: nowrap; }
.count, .index { line-height: 7px; padding-left: 1px; }
.index { padding-right: 4px; text-align: right; color: #d42020; }
.current { background: #000; color: #888; }
.current .index { color: #28d0c0; }
.ruler-top { width: 100%; height: 11px; background: #fbeafb; }
.plane { flex: 1; display: flex; min-height: 0; }
.ruler-side { width: 10px; background: #fbe8fb; }
.ruler-top text, .ruler-side text { font-size: 6px; fill: #333; }
.ruler-top path, .ruler-side path { stroke: #555; fill: none; }
.canvas { position: relative; flex: 1; background: #969491; overflow: hidden; }
.drawing { position: absolute; width: 100%; height: 100%; }
.zone { fill: none; stroke-width: 1; stroke-dasharray: 6 2; }
.zone-blue { stroke: #4444b4; }
.zone-red { stroke: #ee4444; }
.zone-title { font: bold 20px "DejaVu Sans", sans-serif; }
.blue { fill: #0a0af0; }
.red { fill: #ff1010; }
.line { fill: none; }
.body { fill: #00739c; }
.body.cream { fill: #fff2c2; }
.spread { fill: #b2ae94; }
.grain { fill: none; stroke: #113848; }

/* grading dialog */
.dialog {
  position: absolute;
  left: 17px;
  top: 128px;
  width: 143px;
  padding: 2px;
  background: #f0f0f0;
  border: 1px solid #fff;
  box-shadow: 1px 2px 5px #333;
}
.dialog-head { display: flex; justify-content: space-between; background: #fff; height: 16px; margin: -2px -2px 0; padding: 4px 0 0 3px; }
.dialog h2 { margin: 0; font-size: 7px; font-weight: 400; line-height: 9px; }
.close { width: 10px; height: 10px; border: 0; background: #d83c48; color: #fff; font-size: 8px; line-height: 9px; }
.dialog-tools { display: grid; grid-template-columns: repeat(11, 12px); grid-auto-rows: 12px; }
.dialog-tools button { display: flex; align-items: center; justify-content: center; border: 0; border-right: 1px solid #aaa; border-bottom: 1px solid #bbb; background: #f4f4f4; }
.dialog-tools svg { width: 10px; height: 10px; }
.order { display: flex; align-items: center; width: 50px; height: 12px; margin: 9px 0 4px 2px; border: 1px solid #888; background: #f6f6f6; }
.order select { appearance: none; width: 40px; height: 10px; padding: 0; border: 0; background: none; color: #222; font: 7px "Liberation Sans", Arial, sans-serif; }
.order .drop { height: 10px; }
.grid-area { background: #c4c4c4; padding: 0 0 12px; border-top: 1px solid #888; }
.grading { width: 110px; height: 163px; table-layout: fixed; border-collapse: collapse; background: #fdf6f6; text-align: center; font-size: 7px; line-height: 8px; }
.grading th, .grading td { padding: 0; border: 1px solid #555; }
.grading th { background: #f1ead8; font-weight: 400; font-size: 8px; }
.col-size { width: 32px; }
.col-color { width: 4px; }
.grading td:first-child { background: #f0f0dc; text-align: left; }
.grading label { display: flex; align-items: center; gap: 1px; width: 28px; }
.grading input { appearance: none; display: flex; align-items: center; justify-content: center; width: 7px; height: 7px; margin: 0 0 0 1px; border: 1px solid #333; background: #fff; }
.grading input::after { content: ""; width: 2px; height: 4px; border: solid #111; border-width: 0 1px 1px 0; transform: rotate(40deg); }
.grading input[type="radio"] { border-color: #bbb; border-radius: 50%; }
.grading input[type="radio"]::after { width: 2px; height: 2px; border: 0; background: #111; transform: none; }
.grading .last td:nth-child(n+3) { background: #808080; }
.grading .c36 { background: #00b020; }
.grading .c38 { background: #d81010; }
.grading .c40 { background: #1010b8; }
.grading .c42 { background: #10c8d0; }
.grading .c44 { background: #800868; }
.grading .c46 { background: #000; }
.grading .c48 { background: #808080; }
.grading .c50 { background: #808020; }
.grading .c52 { background: #d8d8d8; }
.grading .c54 { background: #087818; }
.grading .c56 { background: #080870; }
.grading .c58 { background: #f010e0; }
.grading .c60 { background: #087c74; }

/* status bar */
.status { display: flex; justify-content: space-between; height: 11px; padding: 0 12px 0 67px; line-height: 11px; }
.cells { display: flex; align-items: center; gap: 4px; }
.cells svg { width: 8px; height: 8px; }
.cells i { width: 12px; height: 9px; border: 1px solid #ccc; }
.cells b { font-weight: 400; }
```

FILE: app.js
```js
const COLORS = ['#18c040', '#e03838', '#1818c8', '#18b8f0', '#781090', '#08101c', '#707070',
  '#8c8848', '#c8c8b0', '#107830', '#281878', '#d048d0', '#108080'];
const BASE = 5;
const NS = 'http://www.w3.org/2000/svg';

function add(parent, tag, attrs, text) {
  const el = document.createElementNS(NS, tag);
  for (const key in attrs) el.setAttribute(key, attrs[key]);
  if (text !== undefined) el.textContent = text;
  parent.appendChild(el);
  return el;
}

function blend(inner, outer, t) {
  const to = outer.match(/-?\d+/g);
  let i = 0;
  return inner.replace(/-?\d+/g, n => (+n + (to[i++] - n) * t).toFixed(1));
}

const nests = document.getElementById('nests');
const marks = document.getElementById('marks');

/* strong sizes get a full line, the middle sizes a faint one */
const WEIGHT = [0.7, 0.5, 0.7, 1.4, 0.6, 1, 0.3, 0.4, 0.3, 0.7, 0.7, 1, 0.7];

function nest(inner, outer, { shift = '0 0', fill = 'body' } = {}) {
  const g = add(nests, 'g', { transform: `translate(${shift})` });
  if (fill) {
    add(g, 'path', { class: 'spread', d: blend(inner, outer, 0.75) });
    add(g, 'path', { class: fill, d: blend(inner, outer, fill === 'body' ? 0.42 : 0) });
  }
  [...COLORS.keys()].filter(k => k !== BASE).concat(BASE).forEach(k => {
    add(g, 'path', { class: 'line', stroke: COLORS[k], 'stroke-width': WEIGHT[k], d: blend(inner, outer, k / 12) });
  });
}

function node(x, y, color = '#08080c', size = 5) {
  add(marks, 'rect', { x: x - size / 2, y: y - size / 2, width: size, height: size, fill: color });
}

function stack(x1, y1, x2, y2) {
  COLORS.forEach((c, k) => node(x1 + (x2 - x1) * k / 12, y1 + (y2 - y1) * k / 12, c, 4));
  node(x1 + (x2 - x1) * BASE / 12, y1 + (y2 - y1) * BASE / 12);
}

function grain(x1, x2, y) {
  add(marks, 'path', { class: 'grain', 'stroke-width': 0.8, d: `M${x1} ${y}H${x2}M${x1 + 4} ${y - 2}L${x1} ${y}l4 2M${x2 - 4} ${y - 2}L${x2} ${y}l-4 2` });
}

/* back yoke */
nest('M193 176 C250 174 270 178 300 181 S330 182 377 183 L377 225 C330 224 290 226 250 227 L204 220 L188 200 C190 190 192 188 193 176Z',
  'M185 176 C250 174 270 178 300 181 S330 182 383 183 L383 256 C340 255 300 256 258 258 L198 236 L174 202 C183 192 183 188 185 176Z', { fill: 'body cream' });
stack(250, 225, 258, 257);
stack(376, 225, 383, 256);
stack(192, 176, 185, 176);
stack(187, 198, 175, 202);
node(379, 182); node(384, 182, '#108080'); node(379, 238);
grain(290, 336, 209);

/* pocket */
add(nests, 'path', { class: 'body', stroke: '#102028', d: 'M428 190H479V207L473 213H428Z' });
[[428, 190], [479, 190], [479, 207], [473, 213], [437, 213], [428, 213]].forEach(p => node(...p, '#08080c', 4));
grain(441, 467, 199);

/* collar */
nest('M423 264 C424 257 427 252 434 251 L478 251 L522 251 C529 252 534 258 535 264 Z',
  'M409 264 C413 254 417 249 424 248 L478 248 L531 248 C540 249 543 255 546 264 Z');
node(409, 263, '#108080'); node(546, 263, '#108080');
[[417, 263], [538, 263], [477, 249], [477, 264]].forEach(p => node(...p));
grain(447, 508, 258);

/* cuff */
nest('M558 184 L573 184 C585 186 596 194 598 205', 'M558 170 L573 172 C588 176 597 186 598 197', { fill: '' });
add(nests, 'path', { class: 'grain', d: 'M558.500 170V228M598.500 197V228' });
nest('M558 228 L598 228 L598 248 C597 262 588 270 573 271 L558 271 Z', 'M558 228 L598 228 L598 262 C595 274 586 282 573 283 L558 284 Z');
[[558, 228], [598, 228], [598, 253], [558, 276], [573, 275]].forEach(p => node(...p, '#08080c', 4));
[[598, 261], [558, 284], [573, 283]].forEach(p => node(...p, '#108080', 4));
grain(568, 589, 246);

/* upper sleeve */
nest('M464 320 L578 330 C592 331 601 342 601 350 L599 367 C560 363 520 363 472 368 C475 355 476 350 474 343 C471 335 467 330 464 320Z',
  'M457 294 L578 314 C592 316 603 330 603 346 L599 367 C560 363 520 363 472 368 C476 355 476 345 473 336 C468 320 460 310 457 294Z');
stack(457, 325, 457, 294);
stack(465, 333, 462, 308);
stack(578, 330, 578, 314);
node(472, 367); node(599, 367);
grain(502, 554, 340);

/* back bodice */
nest('M273 307 C314 311 354 312 392 311 L395 402 L190 402 L221 318 C249 330 272 328 274 318 C275 314 273 311 273 307Z',
  'M274 276 C314 282 354 284 400 282 L401 402 L180 402 L205 305 C240 319 264 320 270 307 C272 298 268 289 274 276Z');
stack(266, 308, 273, 276);
stack(393, 312, 400, 282);
node(397, 402); node(402, 402, '#108080');
grain(280, 333, 350);

/* facing */
nest('M200 410 L404 410 L403 447 L214 470 L200 455Z', 'M192 410 L410 410 L409 447 L202 470 L192 455Z');
node(406, 410); node(411, 410, '#108080'); node(405, 447); node(410, 447, '#108080'); node(211, 470); node(202, 470, '#108080');
grain(272, 329, 427);

/* front sleeve, drawn on the fabric and on the marker */
const FRONT = ['M484 380 C520 387 560 391 609 392 L609 420 C607 433 598 441 584 443 L462 446 L452 426 C450 408 478 402 484 380Z',
  'M484 380 C520 387 560 391 609 392 L610 432 C607 446 598 454 584 457 L462 471 L444 433 C450 406 478 402 484 380Z'];
for (const [dx, dy] of [[0, 0], [305, -142]]) {
  nest(...FRONT, { shift: `${dx} ${dy}` });
  stack(462 + dx, 443 + dy, 462 + dx, 471 + dy);
  stack(584 + dx, 443 + dy, 584 + dx, 457 + dy);
  node(484 + dx, 380 + dy); node(609 + dx, 392 + dy); node(449 + dx, 427 + dy);
  node(444 + dx, 433 + dy, '#108080', 4);
}
grain(524, 580, 432);
grain(858, 892, 292);
add(marks, 'path', { class: 'grain', d: 'M791 276H831V289L826 293H791Z' });
[[791, 276], [831, 276], [831, 289], [826, 293], [791, 293]].forEach(p => node(...p, '#08080c', 4));

/* front bodice marker */
nest('M809 363 C850 367 890 368 927 367 L927 440 L919 440 L919 456 L765 456 L763 434 C760 424 752 416 740 411 L757 374 C785 386 808 384 810 374 C811 370 809 367 809 363Z',
  'M810 332 C850 338 890 340 936 338 L937 440 L927 440 L927 456 L755 456 L752 432 C747 423 738 416 723 411 L741 361 C776 375 800 376 806 363 C808 354 804 345 810 332Z');
stack(801, 364, 810, 332);
stack(919, 367, 926, 338);
stack(927, 366, 936, 338);
[[751, 370], [732, 411], [757, 432], [760, 456], [923, 440], [932, 440], [923, 456]].forEach(p => node(...p));
[[741, 361], [723, 411], [750, 432], [755, 456], [937, 440], [928, 456]].forEach(p => node(...p, '#108080', 4));
grain(839, 865, 394);
[[486, 417], [486, 435], [764, 417], [795, 418], [825, 420], [856, 421], [887, 423],
  [767, 450], [795, 449], [825, 449], [856, 449], [887, 449]].forEach(p => node(...p, '#0c2c44', 3));

/* rulers: one unit is 2.56 px, labelled every ten */
const UNIT = 2.56;
function drawRulers() {
  const top = document.getElementById('rulerTop');
  const side = document.getElementById('rulerSide');
  top.textContent = side.textContent = '';
  const width = top.clientWidth, height = side.clientHeight;
  const zeroX = 391, zeroY = 250;
  let d = '';
  for (let n = Math.ceil((10 - zeroX) / UNIT); zeroX + n * UNIT < width; n++) {
    const x = zeroX + n * UNIT;
    d += `M${x.toFixed(1)} 11v${n % 10 === 0 ? -5 : n % 5 === 0 ? -4 : -2}`;
    if (n % 10 === 0 && x < width - 20) add(top, 'text', { x, y: 6 }, n);
  }
  add(top, 'path', { d, 'stroke-width': 0.8 });
  add(top, 'text', { x: width - 9, y: 6 }, 'cm');
  d = '';
  for (let n = Math.floor(zeroY / UNIT); zeroY - n * UNIT < height; n--) {
    const y = zeroY - n * UNIT;
    d += `M10 ${y.toFixed(1)}h${n % 10 === 0 ? -5 : n % 5 === 0 ? -4 : -2}`;
    if (n % 10 === 0) add(side, 'text', { transform: `translate(5 ${y}) rotate(-90)` }, n);
  }
  add(side, 'path', { d, 'stroke-width': 0.8 });
}
drawRulers();
window.addEventListener('resize', drawRulers);
```
